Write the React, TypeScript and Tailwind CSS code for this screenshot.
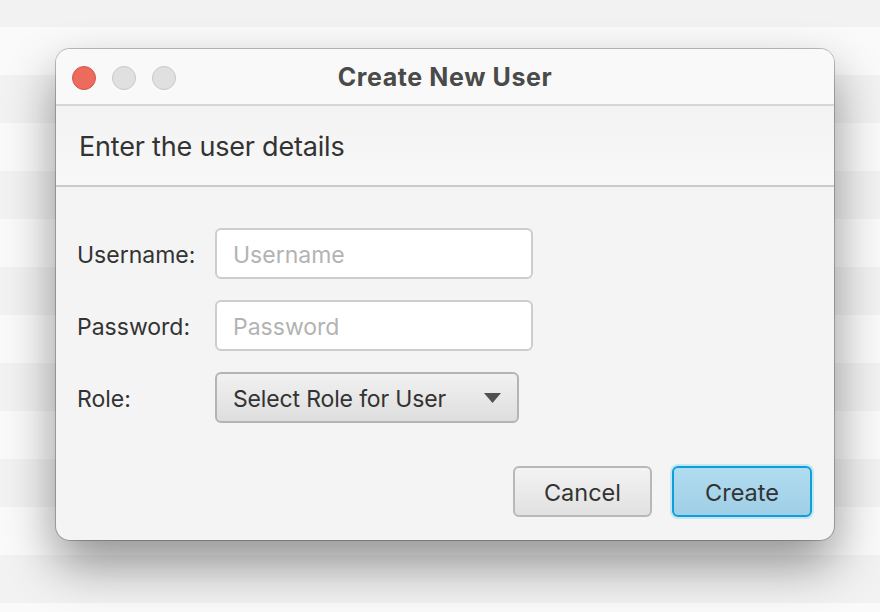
import React from "react";

export default function App() {
  const font = { fontFamily: "Inter, 'Noto Sans', sans-serif" };
  return (
    <div
      className="w-[880px] h-[612px] overflow-hidden bg-[repeating-linear-gradient(to_bottom,#f2f2f2_0px,#f2f2f2_27px,#fafafa_27px,#fafafa_75px,#f2f2f2_75px,#f2f2f2_96px)] pt-[49px] pl-[56px]"
      style={font}
    >
      <div className="w-[778px] h-[491px] rounded-[14px] bg-[#f4f4f4] overflow-hidden flex flex-col shadow-[0_24px_50px_rgba(0,0,0,0.42),0_0_0_1px_rgba(0,0,0,0.24)]">
        {/* Title bar */}
        <div className="relative h-[57px] bg-[#f9f9f9] border-b-2 border-[#d6d6d6] flex items-center justify-center shrink-0">
          <div className="absolute left-[16px] top-[17px] flex gap-[16px]">
            <div className="w-[24px] h-[24px] rounded-full bg-[#ec6a5e] border border-[#d2574b]" />
            <div className="w-[24px] h-[24px] rounded-full bg-[#e0e0e0] border border-[#c8c8c8]" />
            <div className="w-[24px] h-[24px] rounded-full bg-[#e0e0e0] border border-[#c8c8c8]" />
          </div>
          <span className="text-[25px] font-bold text-[#4a4a4a] tracking-[0.6px] mt-[2px]">Create New User</span>
        </div>
        {/* Header */}
        <div className="h-[81px] bg-[linear-gradient(to_bottom,#f3f3f3,#f8f8f8)] border-b-2 border-[#cbcbcb] flex items-center pl-[23px] shrink-0">
          <span className="text-[27px] text-[#333333] tracking-[-0.2px] mt-[3px]">Enter the user details</span>
        </div>
        {/* Form */}
        <div className="flex-1 flex flex-col pl-[21px] pr-[22px] pt-[41px]">
          <div className="flex flex-col gap-[21px]">
            <div className="flex items-center h-[51px]">
              <span className="w-[138px] text-[23px] text-[#333333] mt-[3px]">Username:</span>
              <div className="w-[318px] h-[51px] rounded-[6px] bg-white border-2 border-[#cdcdcd] flex items-center pl-[16px]">
                <span className="text-[23px] text-[#b3b3b3] mt-[3px]">Username</span>
              </div>
            </div>
            <div className="flex items-center h-[51px]">
              <span className="w-[138px] text-[23px] text-[#333333] mt-[3px]">Password:</span>
              <div className="w-[318px] h-[51px] rounded-[6px] bg-white border-2 border-[#cdcdcd] flex items-center pl-[16px]">
                <span className="text-[23px] text-[#b3b3b3] mt-[3px]">Password</span>
              </div>
            </div>
            <div className="flex items-center h-[51px]">
              <span className="w-[138px] text-[23px] text-[#333333] mt-[3px]">Role:</span>
              <div className="w-[304px] h-[51px] rounded-[6px] bg-[linear-gradient(to_bottom,#f1f1f1,#dedede)] border-2 border-[#b4b4b4] flex items-center pl-[16px] pr-[16px] justify-between">
                <span className="text-[23px] text-[#333333] tracking-[-0.15px] mt-[3px]">Select Role for User</span>
                <svg width="17" height="10" viewBox="0 0 17 10">
                  <polygon points="0,0 17,0 8.5,10" fill="#505050" />
                </svg>
              </div>
            </div>
          </div>
          <div className="flex justify-end gap-[20px] mt-[43px]">
            <div className="w-[139px] h-[51px] rounded-[6px] border-2 border-[#b8b8b8] bg-[linear-gradient(to_bottom,#f3f3f3,#e1e1e1)] flex items-center justify-center">
              <span className="text-[23.5px] text-[#333333] mt-[2px]">Cancel</span>
            </div>
            <div className="w-[140px] h-[51px] rounded-[6px] border-2 border-[#0c9fd8] bg-[linear-gradient(to_bottom,#b1dcf0,#9fcfe6)] shadow-[0_0_0_2px_#c4e6f5] flex items-center justify-center">
              <span className="text-[23.5px] text-[#333333] mt-[2px]">Create</span>
            </div>
          </div>
        </div>
      </div>
    </div>
  );
}
